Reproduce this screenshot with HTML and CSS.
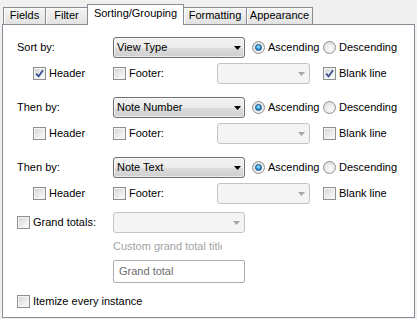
FILE: index.html
```html
<!DOCTYPE html>
<html>
<head>
<meta charset="utf-8">
<link rel="stylesheet" href="styles.css">
</head>
<body>
<div class="dialog">
  <div class="tabs">
    <div class="tab w-fields">Fields</div>
    <div class="tab w-filter">Filter</div>
    <div class="tab sel w-sort">Sorting/Grouping</div>
    <div class="tab w-format">Formatting</div>
    <div class="tab w-appear">Appearance</div>
  </div>
  <div class="panel">
    <div class="group">
      <div class="mainrow">
        <span class="label">Sort by:</span>
        <div class="combo"><span class="val">View Type</span><svg class="arrow" width="7" height="4" viewBox="0 0 7 4"><path d="M0 0H7L3.5 4Z"/></svg></div>
        <div class="radio asc"><span class="rb on"></span>Ascending</div>
        <div class="radio"><span class="rb"></span>Descending</div>
      </div>
      <div class="subrow">
        <div class="check c-header"><span class="cb"><svg width="11" height="11" viewBox="0 0 11 11"><path d="M2.2 5.6L4.6 8.4L9 2.2"/></svg></span>Header</div>
        <div class="check c-footer"><span class="cb"></span>Footer:</div>
        <div class="combo disabled small"><span class="val"></span><svg class="arrow" width="7" height="4" viewBox="0 0 7 4"><path d="M0 0H7L3.5 4Z"/></svg></div>
        <div class="check"><span class="cb"><svg width="11" height="11" viewBox="0 0 11 11"><path d="M2.2 5.6L4.6 8.4L9 2.2"/></svg></span>Blank line</div>
      </div>
    </div>
    <div class="group">
      <div class="mainrow">
        <span class="label">Then by:</span>
        <div class="combo"><span class="val">Note Number</span><svg class="arrow" width="7" height="4" viewBox="0 0 7 4"><path d="M0 0H7L3.5 4Z"/></svg></div>
        <div class="radio asc"><span class="rb on"></span>Ascending</div>
        <div class="radio"><span class="rb"></span>Descending</div>
      </div>
      <div class="subrow">
        <div class="check c-header"><span class="cb"></span>Header</div>
        <div class="check c-footer"><span class="cb"></span>Footer:</div>
        <div class="combo disabled small"><span class="val"></span><svg class="arrow" width="7" height="4" viewBox="0 0 7 4"><path d="M0 0H7L3.5 4Z"/></svg></div>
        <div class="check"><span class="cb"></span>Blank line</div>
      </div>
    </div>
    <div class="group">
      <div class="mainrow">
        <span class="label">Then by:</span>
        <div class="combo"><span class="val">Note Text</span><svg class="arrow" width="7" height="4" viewBox="0 0 7 4"><path d="M0 0H7L3.5 4Z"/></svg></div>
        <div class="radio asc"><span class="rb on"></span>Ascending</div>
        <div class="radio"><span class="rb"></span>Descending</div>
      </div>
      <div class="subrow">
        <div class="check c-header"><span class="cb"></span>Header</div>
        <div class="check c-footer"><span class="cb"></span>Footer:</div>
        <div class="combo disabled small"><span class="val"></span><svg class="arrow" width="7" height="4" viewBox="0 0 7 4"><path d="M0 0H7L3.5 4Z"/></svg></div>
        <div class="check"><span class="cb"></span>Blank line</div>
      </div>
    </div>
    <div class="totalrow">
      <div class="check c-total"><span class="cb"></span>Grand totals:</div>
      <div class="combo disabled"><span class="val"></span><svg class="arrow" width="7" height="4" viewBox="0 0 7 4"><path d="M0 0H7L3.5 4Z"/></svg></div>
    </div>
    <div class="customlabel">Custom grand total title</div>
    <div class="textbox">Grand total</div>
    <div class="check itemize"><span class="cb"></span>Itemize every instance</div>
  </div>
</div>
</body>
</html>
```
FILE: styles.css
```css
html, body {
  margin: 0;
  padding: 0;
}
body {
  background: #f0f0f0;
  font: 11px/13px "Liberation Sans", Arial, sans-serif;
  color: #000;
  width: 417px;
  height: 319px;
  overflow: hidden;
}
.dialog {
  padding: 4px 0 0 2px;
}
.tabs {
  display: flex;
  align-items: flex-end;
  height: 20px;
  padding-left: 1px;
}
.tab {
  box-sizing: border-box;
  height: 17px;
  border: 1px solid #898c95;
  border-bottom: none;
  background: linear-gradient(#f4f4f4, #e2e2e2);
  box-shadow: inset 1px 1px 0 #fcfcfc;
  text-align: center;
  line-height: 15px;
  margin-left: -1px;
  white-space: nowrap;
}
.tab:first-child { margin-left: 0; }
.tab.sel {
  position: relative;
  z-index: 1;
  height: 21px;
  margin-bottom: -1px;
  background: #fff;
  box-shadow: none;
  padding-top: 1px;
}
.w-fields { width: 43px; }
.w-filter { width: 43px; }
.w-sort { width: 97px; }
.w-format { width: 64px; }
.w-appear { width: 67px; }

.panel {
  box-sizing: border-box;
  width: 413px;
  height: 294px;
  border: 1px solid #898c95;
  background: #fff;
  padding: 12px 0 0 14px;
}
.group + .group { margin-top: 13px; }
.mainrow, .subrow, .totalrow {
  display: flex;
  align-items: center;
  height: 21px;
}
.subrow {
  margin-top: 5px;
  padding-left: 16px;
}
.label { width: 96px; }

.combo {
  box-sizing: border-box;
  width: 132px;
  height: 21px;
  border: 1px solid #707070;
  border-radius: 3px;
  background: linear-gradient(#f2f2f2 0%, #ebebeb 50%, #dddddd 51%, #cfcfcf 100%);
  box-shadow: inset 0 0 0 1px rgba(255,255,255,0.6);
  display: flex;
  align-items: center;
  padding: 0 3px 0 3px;
}
.combo .val { flex: 1; }
.combo .arrow { fill: #000; }
.combo.disabled {
  border-color: #c4c4c4;
  background: #f4f4f4;
  box-shadow: none;
  padding-right: 4px;
}
.combo.disabled .arrow { fill: #a6a6a6; }
.combo.small {
  width: 93px;
  margin-right: 13px;
}

.radio {
  display: flex;
  align-items: center;
}
.radio.asc {
  margin-left: 7px;
  width: 71px;
}
.rb {
  box-sizing: border-box;
  width: 13px;
  height: 13px;
  border-radius: 50%;
  border: 1px solid #8e8f8f;
  background: radial-gradient(circle at 60% 65%, #fbfbfb 0%, #e6e6e6 60%, #d2d2d2 100%);
  margin-right: 3px;
  display: flex;
  align-items: center;
  justify-content: center;
}
.rb.on::after {
  content: "";
  width: 7px;
  height: 7px;
  border-radius: 50%;
  box-sizing: border-box;
  border: 1px solid #0f4e86;
  background: radial-gradient(circle at 45% 35%, #b9ecff 0%, #3aa6e4 45%, #0a5da6 100%);
}

.check {
  display: flex;
  align-items: center;
  white-space: nowrap;
}
.cb {
  box-sizing: border-box;
  width: 13px;
  height: 13px;
  border: 1px solid #8e8f8f;
  background: linear-gradient(135deg, #cfd2d6 0%, #eeeeee 60%, #fbfbfb 100%);
  box-shadow: inset 0 0 0 1px #f4f4f4;
  margin-right: 3px;
  flex: none;
}
.cb svg {
  display: block;
  fill: none;
  stroke: #3b4f8f;
  stroke-width: 1.8;
}
.c-header { width: 80px; }
.c-footer { width: 104px; }
.c-total { width: 96px; }

.totalrow { margin-top: 8px; }
.customlabel {
  margin: 7px 0 0 96px;
  width: 109px;
  overflow: hidden;
  white-space: nowrap;
  color: #a3a3a3;
}
.textbox {
  box-sizing: border-box;
  margin: 7px 0 0 96px;
  width: 132px;
  height: 23px;
  border: 1px solid #abadb3;
  border-radius: 2px;
  padding-left: 5px;
  line-height: 21px;
  color: #6d6d6d;
}
.itemize {
  margin-top: 12px;
}
```
